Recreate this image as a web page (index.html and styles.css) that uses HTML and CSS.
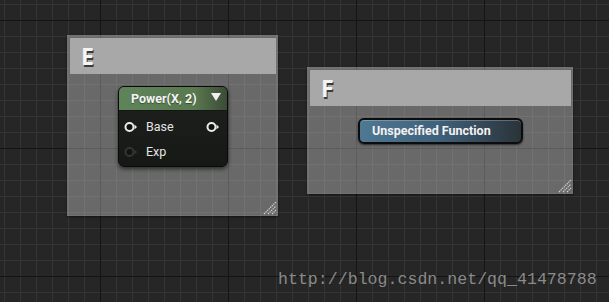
FILE: index.html
```html
<!DOCTYPE html>
<html>
<head>
<meta charset="utf-8">
<link rel="stylesheet" href="styles.css">
</head>
<body>
<div class="canvas">
  <div class="comment comment-e">
    <div class="comment-title">E</div>
    <div class="comment-body">
      <div class="node">
        <div class="node-head">
          <span class="node-name">Power(X, 2)</span>
          <span class="node-arrow"></span>
        </div>
        <div class="node-rows">
          <div class="pin-row">
            <span class="pin-left">
              <svg class="pin" width="14" height="12" viewBox="0 0 14 12"><circle cx="5.5" cy="6" r="4" fill="#111" stroke="#ececec" stroke-width="2"/><path d="M10.5 3.5 L13 6 L10.5 8.5 Z" fill="#ececec"/></svg>
              <span class="pin-label">Base</span>
            </span>
            <svg class="pin" width="14" height="12" viewBox="0 0 14 12"><circle cx="5.5" cy="6" r="4" fill="#111" stroke="#ececec" stroke-width="2"/><path d="M10.5 3.5 L13 6 L10.5 8.5 Z" fill="#ececec"/></svg>
          </div>
          <div class="pin-row">
            <span class="pin-left">
              <svg class="pin" width="14" height="12" viewBox="0 0 14 12"><circle cx="5.5" cy="6" r="4" fill="#131313" stroke="#353535" stroke-width="2"/><path d="M10.5 3.5 L13 6 L10.5 8.5 Z" fill="#353535"/></svg>
              <span class="pin-label">Exp</span>
            </span>
          </div>
        </div>
      </div>
    </div>
    <svg class="grip" width="14" height="14" viewBox="0 0 14 14"><path d="M1 13 L13 1 M5 13 L13 5 M9 13 L13 9" stroke="#d0d0d0" stroke-width="1.2" stroke-dasharray="1.4 0.8"/></svg>
  </div>

  <div class="comment comment-f">
    <div class="comment-title">F</div>
    <div class="comment-body">
      <div class="func-btn">Unspecified Function</div>
    </div>
    <svg class="grip" width="14" height="14" viewBox="0 0 14 14"><path d="M1 13 L13 1 M5 13 L13 5 M9 13 L13 9" stroke="#d0d0d0" stroke-width="1.2" stroke-dasharray="1.4 0.8"/></svg>
  </div>

  <div class="watermark">http://blog.csdn.net/qq_41478788</div>
</div>
</body>
</html>
```

FILE: styles.css
```css
html, body {
  margin: 0;
  padding: 0;
}
body {
  width: 609px;
  height: 302px;
  overflow: hidden;
  font-family: Roboto, "Liberation Sans", sans-serif;
}
.canvas {
  position: relative;
  width: 609px;
  height: 302px;
  background:
    linear-gradient(to right, #141414 1px, transparent 1px) 100px 20px / 128px 128px,
    linear-gradient(to bottom, #141414 1px, transparent 1px) 100px 20px / 128px 128px,
    linear-gradient(to right, #343434 1px, transparent 1px) 4px 4px / 16px 16px,
    linear-gradient(to bottom, #343434 1px, transparent 1px) 4px 4px / 16px 16px,
    #262626;
}
.comment {
  position: absolute;
  box-sizing: border-box;
  padding: 3px 2px 0 3px;
  background: rgba(255, 255, 255, 0.31);
  box-shadow: inset 0 0 0 1px rgba(255,255,255,0.06), 0 1px 2px rgba(0,0,0,0.5);
  display: flex;
  flex-direction: column;
}
.comment-e {
  left: 67px;
  top: 35px;
  width: 211px;
  height: 181px;
}
.comment-f {
  left: 307px;
  top: 67px;
  width: 266px;
  height: 127px;
}
.comment-title {
  height: 36px;
  background: #a8a8a8;
  color: #f4f4f4;
  font-family: "Open Sans", "DejaVu Sans", sans-serif;
  font-weight: 700;
  font-size: 23px;
  line-height: 37px;
  padding-left: 11px;
  text-shadow: 1px 2px 0 #3a3a3a;
}
.comment-body {
  padding: 12px 0 0 48px;
}
.node {
  width: 110px;
  height: 81px;
  box-sizing: border-box;
  border: 1px solid #0a0a0a;
  border-radius: 6px;
  background: linear-gradient(#1f221f, #161816);
  box-shadow: 0 2px 4px rgba(0,0,0,0.6);
  overflow: hidden;
}
.node-head {
  height: 23px;
  background: linear-gradient(to right, #60845a 0%, #59794f 70%, #3b4b37 100%);
  display: flex;
  align-items: center;
  padding: 0 6px 0 12px;
  border-bottom: 1px solid #141614;
}
.node-name {
  color: #f4f4f4;
  font-weight: 700;
  font-size: 12.5px;
  flex: 1;
  text-shadow: 0 1px 1px rgba(0,0,0,0.4);
}
.node-arrow {
  width: 0;
  height: 0;
  border-left: 5.5px solid transparent;
  border-right: 5.5px solid transparent;
  border-top: 8px solid #f0f0f0;
  margin-top: -4px;
}
.node-rows {
  display: flex;
  flex-direction: column;
  padding: 3px 7px 0 5px;
}
.pin-row {
  height: 25px;
  display: flex;
  align-items: center;
  justify-content: space-between;
}
.pin-left {
  display: flex;
  align-items: center;
  gap: 8px;
}
.pin {
  display: block;
}
.pin-label {
  color: #e4e4e4;
  font-size: 12.5px;
}
.func-btn {
  width: 165px;
  height: 26px;
  box-sizing: border-box;
  border: 2px solid #0c0c0c;
  border-radius: 6px;
  background: linear-gradient(to right, #4e7894 0%, #3f6079 50%, #2a3339 100%);
  box-shadow: inset 0 1px 0 rgba(255,255,255,0.25), 0 1px 2px rgba(0,0,0,0.6);
  color: #f2f2f2;
  font-weight: 700;
  font-size: 12.5px;
  line-height: 22px;
  padding-left: 12px;
}
.grip {
  position: absolute;
  right: 1px;
  bottom: 1px;
}
.watermark {
  position: absolute;
  left: 278px;
  top: 270px;
  font-family: "Liberation Mono", monospace;
  font-size: 16.6px;
  color: #8a8a8a;
}
```
